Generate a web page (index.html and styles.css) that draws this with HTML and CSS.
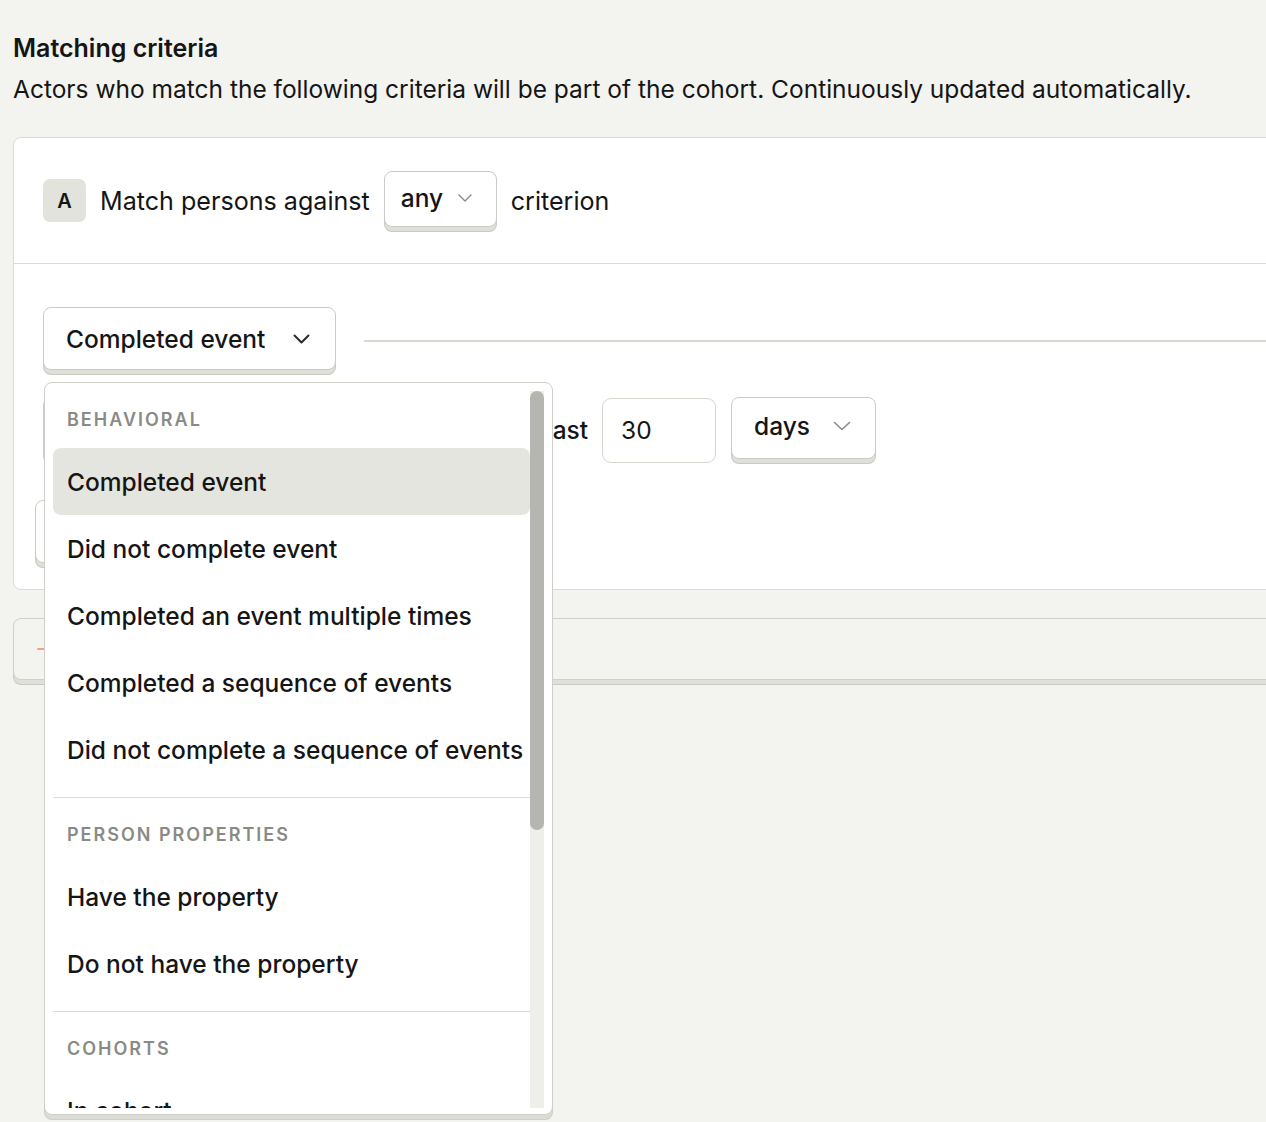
FILE: index.html
```html
<!DOCTYPE html>
<html lang="en">
<head>
<meta charset="utf-8">
<title>Matching criteria</title>
<link rel="stylesheet" href="styles.css">
</head>
<body>
<div class="page">
  <h2 class="title">Matching criteria</h2>
  <p class="desc">Actors who match the following criteria will be part of the cohort. Continuously updated automatically.</p>

  <div class="card">
    <div class="card-head">
      <span class="badge">A</span>
      <span class="label">Match persons against</span>
      <button class="btn btn-any">any
        <svg class="chev" width="14" height="8" viewBox="0 0 14 8"><polyline points="1,1 7,7 13,1" fill="none" stroke="#8a8a85" stroke-width="1.4" stroke-linecap="round" stroke-linejoin="round"/></svg>
      </button>
      <span class="label">criterion</span>
    </div>

    <div class="card-body">
      <div class="row row-type">
        <div class="type-wrap">
          <button class="btn btn-type">Completed event
            <svg class="chev" width="17" height="10" viewBox="0 0 17 10"><polyline points="1.5,1.5 8.5,8.5 15.5,1.5" fill="none" stroke="#2a2a2a" stroke-width="2" stroke-linecap="round" stroke-linejoin="round"/></svg>
          </button>

          <div class="menu">
            <div class="menu-list">
              <div class="menu-head">Behavioral</div>
              <div class="menu-item active">Completed event</div>
              <div class="menu-item">Did not complete event</div>
              <div class="menu-item">Completed an event multiple times</div>
              <div class="menu-item">Completed a sequence of events</div>
              <div class="menu-item">Did not complete a sequence of events</div>
              <div class="menu-sep"></div>
              <div class="menu-head">Person properties</div>
              <div class="menu-item">Have the property</div>
              <div class="menu-item">Do not have the property</div>
              <div class="menu-sep"></div>
              <div class="menu-head">Cohorts</div>
              <div class="menu-item">In cohort</div>
              <div class="menu-item">Not in cohort</div>
              <div class="menu-sep"></div>
              <div class="menu-head">Lifecycle</div>
              <div class="menu-item">Completed event for the first time</div>
              <div class="menu-item">Completed event regularly</div>
              <div class="menu-item">Stopped doing an event</div>
              <div class="menu-item">Started doing an event again</div>
            </div>
            <div class="scrollbar"><div class="thumb"></div></div>
          </div>
        </div>
        <div class="rule"></div>
      </div>

      <div class="row row-event">
        <button class="btn btn-event" aria-label="Select event"></button>
        <span class="label label-med">in the last</span>
        <div class="input">30</div>
        <button class="btn btn-days">days
          <svg class="chev" width="18" height="10" viewBox="0 0 18 10"><polyline points="1.5,1.5 9,8.5 16.5,1.5" fill="none" stroke="#8a8a85" stroke-width="1.6" stroke-linecap="round" stroke-linejoin="round"/></svg>
        </button>
      </div>

      <div class="row row-filter">
        <button class="btn btn-filter" aria-label="Add filter"></button>
      </div>
    </div>
  </div>

  <button class="btn btn-group" aria-label="Add criteria group">
    <svg class="plus" width="16" height="16" viewBox="0 0 16 16"><path d="M1 8H15M8 1V15" stroke="#f0a283" stroke-width="2" stroke-linecap="round"/></svg>
  </button>
</div>
</body>
</html>
```
FILE: styles.css
```css
html {
  background: #f3f3ef;
}

body {
  margin: 0;
  padding: 0;
  font-family: Inter, "Noto Sans", sans-serif;
  color: #151515;
}

.page {
  box-sizing: border-box;
  min-height: 100vh;
  padding: 32px 0 0 13px;
  overflow-x: clip;
}

.title {
  margin: 0;
  font-size: 25px;
  line-height: 32px;
  font-weight: 600;
}

.desc {
  margin: 9px 0 0;
  font-size: 24.5px;
  line-height: 32px;
  font-weight: 400;
  white-space: nowrap;
}

.card {
  margin-top: 32px;
  margin-right: -40px;
  background: #fff;
  border: 1px solid #dcdcd5;
  border-radius: 8px;
}

.card-head {
  display: flex;
  align-items: center;
  gap: 14px;
  height: 125px;
  padding-left: 29px;
  border-bottom: 1px solid #dcdcd5;
}

.badge {
  display: flex;
  align-items: center;
  justify-content: center;
  width: 43px;
  height: 43px;
  border-radius: 7px;
  background: #e3e3dd;
  font-size: 20px;
  font-weight: 600;
}

.label {
  font-size: 25.1px;
  font-weight: 400;
  white-space: nowrap;
}

.label-med {
  font-size: 24.5px;
  font-weight: 500;
}

.btn {
  display: flex;
  align-items: center;
  box-sizing: border-box;
  margin: 0;
  background: #fff;
  border: 1px solid #cbcbc5;
  border-radius: 8px;
  font-family: inherit;
  font-size: 24.5px;
  font-weight: 500;
  color: #151515;
  white-space: nowrap;
  box-shadow: 0 5px 0 -1px #e0e0da, 0 5px 0 0 #c9c9c3;
}

.btn-any {
  width: 113px;
  height: 56px;
  padding: 0 24px 2px 16px;
  margin-bottom: 4px;
  justify-content: space-between;
}

.card-body {
  padding: 43px 0 22px 29px;
}

.row {
  display: flex;
  align-items: center;
}

.row-type {
  height: 68px;
}

.type-wrap {
  position: relative;
  align-self: flex-start;
}

.btn-type {
  width: 293px;
  height: 63px;
  padding: 0 25px 0 22px;
  justify-content: space-between;
}

.rule {
  flex: 1;
  height: 2px;
  margin-left: 28px;
  background: #d9d9d2;
}

.row-event {
  margin-top: 22px;
  gap: 14px;
}

.btn-event {
  width: 418px;
  height: 62px;
  margin-bottom: 4px;
  padding: 0 20px;
}

.input {
  box-sizing: border-box;
  width: 114px;
  height: 65px;
  display: flex;
  align-items: center;
  padding-left: 18px;
  border: 1px solid #d6d6cf;
  border-radius: 9px;
  font-size: 24.5px;
  font-weight: 400;
}

.btn-days {
  width: 145px;
  height: 62px;
  margin-bottom: 4px;
  margin-left: 1px;
  padding: 0 24px 4px 22px;
  justify-content: space-between;
}

.row-filter {
  margin-top: 37px;
  margin-left: -8px;
}

.btn-filter {
  width: 300px;
  height: 63px;
  margin-bottom: 4px;
  padding: 0 20px;
}

.btn-group {
  width: calc(100% + 40px);
  height: 62px;
  margin-top: 28px;
  padding: 0 0 0 23px;
  background: #f3f3ef;
  border-color: #d0d0ca;
}

.plus {
  flex: none;
}

/* Dropdown menu */
.menu {
  position: absolute;
  z-index: 5;
  top: 75px;
  left: 1px;
  box-sizing: border-box;
  display: flex;
  width: 509px;
  height: 733px;
  padding: 8px 8px 6px;
  background: #fff;
  border: 1px solid #cfcfc9;
  border-radius: 8px;
  box-shadow: 0 5px 0 -1px #dcdcd6, 0 5px 0 0 #cfcfc9;
}

.menu-list {
  flex: 1;
  min-width: 0;
  overflow: hidden;
}

.scrollbar {
  flex: none;
  width: 14px;
  background: #efefea;
}

.thumb {
  height: 439px;
  border-radius: 7px;
  background: #b5b6b0;
}

.menu-head {
  display: flex;
  align-items: center;
  height: 57px;
  padding-left: 14px;
  font-size: 18px;
  font-weight: 600;
  letter-spacing: 2px;
  text-transform: uppercase;
  color: #8a8a85;
}

.menu-item {
  display: flex;
  align-items: center;
  height: 67px;
  padding-left: 14px;
  border-radius: 8px;
  font-size: 24.5px;
  font-weight: 500;
  white-space: nowrap;
}

.menu-item.active {
  background: #e5e5df;
}

.menu-sep {
  height: 1px;
  margin: 14px 0 8px;
  background: #dcdcd5;
}
```
